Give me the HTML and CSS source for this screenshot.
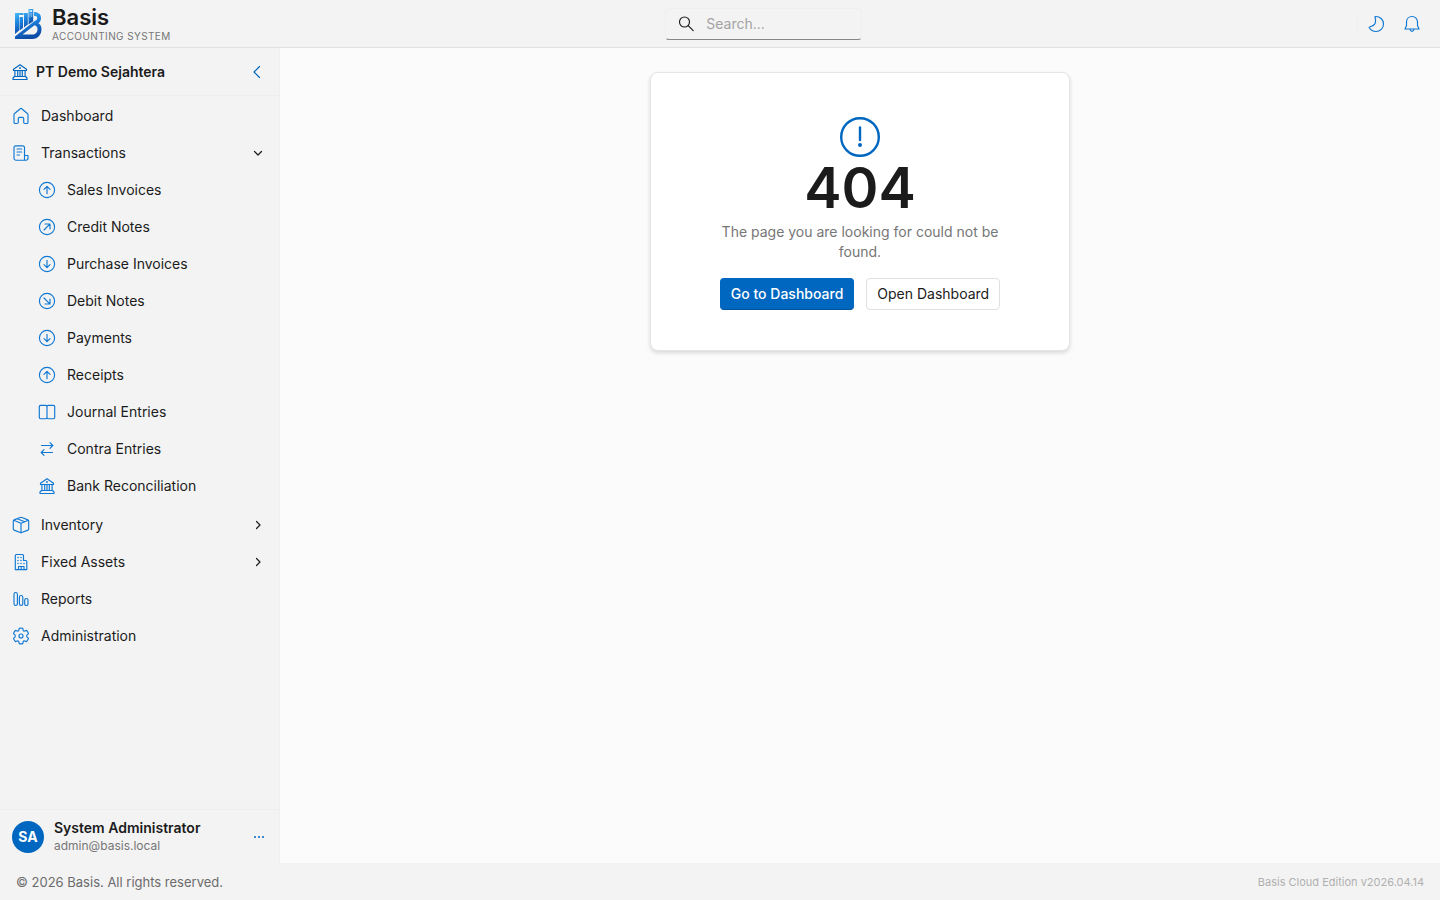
FILE: index.html
```html
<!DOCTYPE html>
<html lang="en">
<head>
<meta charset="utf-8">
<meta name="viewport" content="width=device-width, initial-scale=1">
<title>404 - Basis</title>
<link rel="stylesheet" href="styles.css">
</head>
<body>
<svg class="defs" aria-hidden="true">
  <symbol id="bank" viewBox="0 0 20 20"><path d="M3.500 7.300 10 2.700l6.500 4.600v1.200h-13zM4.900 8.500v6M7.700 8.500v6M12.300 8.500v6M15.100 8.500v6M10 8.500v6M4.500 14.500h11l1.500 1.500v1.500H3V16z"/><circle cx="10" cy="6" r=".4"/></symbol>
  <symbol id="up" viewBox="0 0 20 20"><circle cx="10" cy="10" r="7.600"/><path d="M10 13.700V6.500M7 9.300l3-3 3 3"/></symbol>
  <symbol id="down" viewBox="0 0 20 20"><circle cx="10" cy="10" r="7.600"/><path d="M10 6.300v7.200M7 10.700l3 3 3-3"/></symbol>
  <symbol id="chev" viewBox="0 0 12 12"><path d="m4.500 2.500 3.500 3.500-3.500 3.500"/></symbol>
</svg>
<div class="app">
  <header class="topbar">
    <div class="brand">
      <svg class="logo" viewBox="0 0 28 32" aria-hidden="true">
        <defs><linearGradient id="lg" x1="0" y1="0" x2="0.300" y2="1"><stop offset="0" stop-color="#46bdf8"/><stop offset=".5" stop-color="#1c80dc"/><stop offset="1" stop-color="#0d4da8"/></linearGradient></defs>
        <path fill="url(#lg)" d="M1 5h8.500v2H5v15.500L1 26zM5.500 9H9v11l-3.500 2.500zM10 5h3.800v11.500L10 19.500z"/>
        <path fill="url(#lg)" d="M14.500 1h4.700v12.300l-4.700 3.200z"/>
        <path fill="#d9edfb" d="M15.500 2.200h2.700v1.800h-2.700zM15.500 5.500h1v1h-1zM17.200 5.500h1v1h-1zM15.500 7.500h1v1h-1zM17.200 7.500h1v1h-1z"/>
        <path fill="url(#lg)" fill-rule="evenodd" d="M20 4c4.500 0 7 2.500 7 6 0 2.400-1 4-2.600 5.200 2 1.200 3.100 3.200 3.100 5.800 0 5.500-3.500 10-9 10H1v-2.500L20 13.600c2-1.200 3.200-2 3.200-3.700 0-1.300-1.200-2.100-3.200-2.100zM20.500 17.200 8.500 26.500h9.500c3.500 0 5.500-2.200 5.500-5.300 0-2-1-3.500-3-4z"/>
      </svg>
      <div class="brand-text"><span class="brand-name">Basis</span><span class="brand-sub">ACCOUNTING SYSTEM</span></div>
    </div>
    <label class="search">
      <svg class="i dark" viewBox="0 0 20 20" aria-hidden="true"><circle cx="8.500" cy="8" r="5"/><path d="m12.200 11.700 5 5"/></svg>
      <input type="search" placeholder="Search..." aria-label="Search">
    </label>
    <div class="tools">
      <button type="button" aria-label="Dark mode"><svg class="i" viewBox="0 0 20 20"><path d="M9.300 2.500c4.700-.3 8.200 3.200 8.200 7.500s-3.400 7.500-7.500 7.500c-2.900 0-5.300-1.300-6.700-3.700-.2-.4-.1-.7.300-.8 3-.9 4.700-1.900 5.600-3.800.8-1.800.7-3.600-.2-5.900-.1-.4 0-.7.300-.8z"/></svg></button>
      <button type="button" aria-label="Notifications"><svg class="i" viewBox="0 0 20 20"><path d="M10 2.500c-3.300 0-5.500 2.500-5.500 5.500v3.500L3 15h14l-1.500-3.500V8c0-3-2.200-5.500-5.500-5.500zM7.900 15c.2 1.400 1 2.300 2.100 2.300s1.900-.9 2.100-2.300"/></svg></button>
    </div>
  </header>
  <div class="body">
    <aside class="sidebar">
      <div class="company">
        <svg class="i strong" aria-hidden="true"><use href="#bank"/></svg>
        <span class="company-name">PT Demo Sejahtera</span>
        <button type="button" aria-label="Collapse sidebar"><svg class="i strong" viewBox="0 0 20 20"><path d="m12.500 4.500-5.500 5.500 5.500 5.500"/></svg></button>
      </div>
      <nav class="nav" aria-label="Main">
        <a class="item" href="#"><svg class="i" viewBox="0 0 20 20"><path d="M3 8.700c0-.5.200-.9.600-1.200L9.300 2.700c.4-.4 1-.4 1.400 0l5.700 4.800c.4.300.6.700.6 1.200v7.500c0 .8-.4 1.300-1.200 1.300h-1.900c-.7 0-1.200-.4-1.200-1.200V12.500c0-.8-.4-1.200-1.200-1.200h-3c-.8 0-1.200.4-1.200 1.200v3.800c0 .8-.5 1.200-1.200 1.200H4.200c-.8 0-1.200-.5-1.200-1.300z"/></svg>Dashboard</a>
        <button type="button" class="item" aria-expanded="true"><svg class="i" viewBox="0 0 20 20"><path d="M13.500 12V4.500c0-1-.6-1.700-1.700-1.700H4.700c-1.100 0-1.700.7-1.700 1.700v10.800c0 1.100.7 1.900 1.800 1.900h10.200c1.100 0 2-.8 2-1.900V12.500h-3.500v4.700M6 6h4.700M6 9h4.700M6 12h2.500"/></svg>Transactions<svg class="chev open" aria-hidden="true"><use href="#chev"/></svg></button>
        <div class="sub">
          <a class="item" href="#"><svg class="i"><use href="#up"/></svg>Sales Invoices</a>
          <a class="item" href="#"><svg class="i" viewBox="0 0 20 20"><circle cx="10" cy="10" r="7.600"/><path d="m7 13 5.800-5.800M8 7h5v5"/></svg>Credit Notes</a>
          <a class="item" href="#"><svg class="i"><use href="#down"/></svg>Purchase Invoices</a>
          <a class="item" href="#"><svg class="i" viewBox="0 0 20 20"><circle cx="10" cy="10" r="7.600"/><path d="m7 7 5.800 5.800M13 8v5H8"/></svg>Debit Notes</a>
          <a class="item" href="#"><svg class="i"><use href="#down"/></svg>Payments</a>
          <a class="item" href="#"><svg class="i"><use href="#up"/></svg>Receipts</a>
          <a class="item" href="#"><svg class="i" viewBox="0 0 20 20"><path d="M10 4.500c0-.7-.5-1.200-1.200-1.200H3.500c-.7 0-1.200.5-1.200 1.200v11c0 .7.500 1.200 1.200 1.200h5.300c.7 0 1.200-.5 1.200-1.200zm0 0c0-.7.500-1.200 1.200-1.200h5.300c.7 0 1.200.5 1.200 1.200v11c0 .7-.5 1.200-1.200 1.200h-5.300c-.7 0-1.200-.5-1.200-1.200"/></svg>Journal Entries</a>
          <a class="item" href="#"><svg class="i" viewBox="0 0 20 20"><path d="M4.500 6.500h11.300M13 3.700l2.800 2.800L13 9.300M15.500 13.500H4.200M7 10.700l-2.800 2.800L7 16.300"/></svg>Contra Entries</a>
          <a class="item" href="#"><svg class="i"><use href="#bank"/></svg>Bank Reconciliation</a>
        </div>
        <button type="button" class="item" aria-expanded="false"><svg class="i" viewBox="0 0 20 20"><path d="M9.200 2.500c.5-.2 1.100-.2 1.600 0l6.200 2.400c.4.200.7.500.7 1v8.200c0 .5-.3.800-.7 1l-6.200 2.400c-.5.200-1.100.2-1.600 0L3 15.100c-.4-.2-.7-.5-.7-1V5.900c0-.5.300-.8.700-1zM2.600 5.300 10 8.300l7.400-3M10 8.300v9.300M6.200 3.800l7.500 3"/></svg>Inventory<svg class="chev" aria-hidden="true"><use href="#chev"/></svg></button>
        <button type="button" class="item" aria-expanded="false"><svg class="i" viewBox="0 0 20 20"><path d="M4.300 3.500c0-.6.400-1 1-1h6.200c.6 0 1 .4 1 1V8.500h2.300c.6 0 1 .4 1 1v8.100H4.300zM7.500 17.500v-3h5.500v3M10.200 14.500v3"/><path class="dots" d="M7 5.500h.01M10 5.500h.01M7 8.500h.01M10 8.500h.01M7 11.500h.01M10 11.500h.01M13 11.500h.01"/></svg>Fixed Assets<svg class="chev" aria-hidden="true"><use href="#chev"/></svg></button>
        <a class="item" href="#"><svg class="i" viewBox="0 0 20 20"><rect x="3" y="3.500" width="3.400" height="13" rx="1.700"/><rect x="8.400" y="6.500" width="3.400" height="10" rx="1.700"/><rect x="13.700" y="9.500" width="3.300" height="7" rx="1.600"/></svg>Reports</a>
        <a class="item" href="#"><svg class="i" viewBox="0 0 20 20"><circle cx="10" cy="10" r="2"/><path d="M8.200 2.300q1.800-.4 3.600 0l.3 1.800q.4 1.300 1.700.9l1.700-.6q1.400 1.400 2 3.200l-1.400 1.300q-.9 1.100 0 2.200l1.400 1.300q-.6 1.800-2 3.200l-1.700-.6q-1.300-.4-1.700.9l-.3 1.800q-1.800.4-3.600 0l-.3-1.800q-.4-1.300-1.700-.9l-1.700.6q-1.400-1.400-2-3.200l1.400-1.300q.9-1.100 0-2.200L2.500 7.600q.6-1.800 2-3.200l1.700.6q1.300.4 1.700-.9z"/></svg>Administration</a>
      </nav>
      <div class="user">
        <span class="avatar">SA</span>
        <div class="user-text"><span class="user-name">System Administrator</span><span class="user-mail">admin@basis.local</span></div>
        <button type="button" aria-label="Account menu"><svg class="i more" viewBox="0 0 20 20"><circle cx="6" cy="10" r="1"/><circle cx="10" cy="10" r="1"/><circle cx="14" cy="10" r="1"/></svg></button>
      </div>
    </aside>
    <main class="main">
      <section class="card">
        <svg class="alert" viewBox="0 0 48 48" aria-hidden="true"><circle cx="24" cy="24" r="18.800"/><path d="M24 14.500v12.500"/><circle class="dot" cx="24" cy="32" r="2"/></svg>
        <h1>404</h1>
        <p>The page you are looking for could not be found.</p>
        <div class="actions"><button type="button" class="btn primary">Go to Dashboard</button><button type="button" class="btn">Open Dashboard</button></div>
      </section>
    </main>
  </div>
  <footer class="footer"><span>© 2026 Basis. All rights reserved.</span><small>Basis Cloud Edition v2026.04.14</small></footer>
</div>
</body>
</html>
```
FILE: styles.css
```css
* { box-sizing: border-box; }
body { margin: 0; font: 14px/20px Inter, "Liberation Sans", sans-serif; color: #1b1b1b; background: #f3f3f3; }
button { font: inherit; color: inherit; background: none; border: 0; padding: 0; cursor: pointer; }
a { color: inherit; text-decoration: none; }
.defs { position: absolute; width: 0; height: 0; }
.i { width: 20px; height: 20px; flex: none; display: block; fill: none; stroke: #0f78d4; stroke-width: 1.15; stroke-linecap: round; stroke-linejoin: round; }
.i.strong { stroke: #0067c0; }
.i.dark { stroke: #1b1b1b; }
.dots { stroke-width: 1.5; }
.app { min-height: 100vh; display: flex; flex-direction: column; }

.topbar { height: 48px; flex: none; display: flex; justify-content: space-between; align-items: center; padding: 0 18px 0 14px; border-bottom: 1px solid #e0e0e0; }
.brand { display: flex; align-items: center; gap: 10px; }
.logo { width: 28px; height: 32px; }
.brand-text { display: flex; flex-direction: column; }
.brand-name { font-size: 22px; line-height: 24px; font-weight: 600; }
.brand-sub { font-size: 10px; line-height: 14px; letter-spacing: 0.04em; color: #767676; }
.search { width: 197px; height: 32px; display: flex; align-items: center; gap: 10px; padding: 0 10px; border: 1px solid #efefef; border-bottom-color: #868686; border-radius: 4px; }
.search input { flex: 1; min-width: 0; padding: 0; border: 0; outline: 0; background: none; font: inherit; }
.search input::placeholder { color: #a3a3a3; opacity: 1; }
.tools { display: flex; gap: 16px; padding-left: 8px; border-left: 1px solid #efefef; }

.body { flex: 1; display: flex; }
.sidebar { width: 280px; flex: none; display: flex; flex-direction: column; border-right: 1px solid #efefef; }
.company { height: 48px; display: flex; align-items: center; gap: 6px; padding: 0 12px 0 10px; border-bottom: 1px solid #ededed; }
.company-name { flex: 1; font-weight: 600; }
.nav { flex: 1; padding: 1px 0; }
.item { display: flex; align-items: center; gap: 10px; width: 100%; height: 37px; padding: 0 15px 0 11px; text-align: left; }
.sub { padding: 0 0 2px 26px; }
.chev { width: 12px; height: 12px; margin-left: auto; fill: none; stroke: #1b1b1b; stroke-width: 1.2; stroke-linecap: round; stroke-linejoin: round; }
.chev.open { transform: rotate(90deg); }
.user { display: flex; align-items: center; gap: 10px; padding: 9px 10px 8px 12px; border-top: 1px solid #ededed; }
.avatar { width: 32px; height: 32px; border-radius: 50%; background: #0067c0; color: #fff; font-weight: 700; line-height: 32px; text-align: center; }
.user-text { flex: 1; display: flex; flex-direction: column; line-height: 18px; }
.user-name { font-weight: 600; }
.user-mail { font-size: 12px; color: #767676; }
.more { fill: #0067c0; stroke: none; }

.main { flex: 1; background: #fbfbfb; padding: 24px; display: flex; justify-content: center; align-items: flex-start; }
.card { width: 420px; padding: 40px 64px; border: 1px solid #e5e5e5; border-radius: 8px; background: #fff; box-shadow: 0 2px 4px rgba(0, 0, 0, .14); display: flex; flex-direction: column; align-items: center; text-align: center; }
.alert { width: 48px; height: 48px; fill: none; stroke: #0067c0; stroke-width: 2.400; stroke-linecap: round; }
.alert .dot { fill: #0067c0; stroke: none; }
h1 { margin: 0 0 6px; font-size: 56px; line-height: 55px; font-weight: 600; }
p { margin: 0 0 16px; color: #767676; }
.actions { display: flex; gap: 12px; }
.btn { height: 32px; padding: 0 10px; border: 1px solid #e0e0e0; border-radius: 4px; white-space: nowrap; }
.btn.primary { background: #0067c0; border-color: #0067c0 #0067c0 #00529a; color: #fff; font-weight: 500; }

.footer { height: 37px; flex: none; display: flex; align-items: center; justify-content: space-between; padding: 0 16px; font-size: 13px; color: #6b6b6b; }
.footer small { font-size: 11px; color: #b0b0b0; }
```
